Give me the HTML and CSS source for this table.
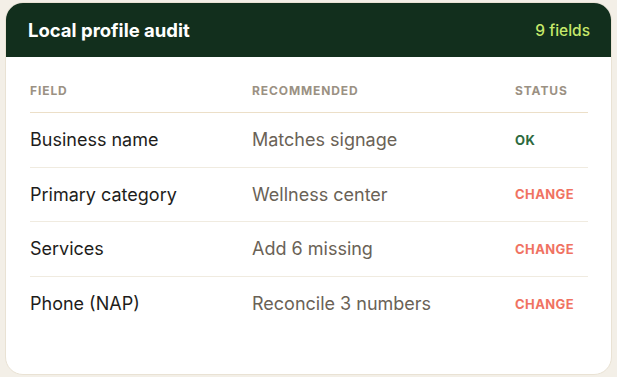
FILE: index.html
```html
<!DOCTYPE html>
<html>
<head>
<meta charset="utf-8">
<link rel="stylesheet" href="styles.css">
</head>
<body>
<div class="card">
  <div class="card-head">
    <div class="title">Local profile audit</div>
    <div class="count">9 fields</div>
  </div>
  <div class="table">
    <div class="row head">
      <div>FIELD</div><div>RECOMMENDED</div><div>STATUS</div>
    </div>
    <div class="row">
      <div class="field">Business name</div><div class="rec">Matches signage</div><div class="status ok">OK</div>
    </div>
    <div class="row">
      <div class="field">Primary category</div><div class="rec">Wellness center</div><div class="status change">CHANGE</div>
    </div>
    <div class="row">
      <div class="field">Services</div><div class="rec">Add 6 missing</div><div class="status change">CHANGE</div>
    </div>
    <div class="row last">
      <div class="field">Phone (NAP)</div><div class="rec">Reconcile 3 numbers</div><div class="status change">CHANGE</div>
    </div>
  </div>
</div>
</body>
</html>
```
FILE: styles.css
```css
html, body { margin: 0; padding: 0; }
body {
  background: #f3efe7;
  padding: 2px 5px 0 5px;
  font-family: Inter, "Noto Sans", sans-serif;
}
.card {
  width: 607px;
  height: 373px;
  box-sizing: border-box;
  background: #fff;
  border: 1px solid #e9e2d4;
  border-radius: 18px;
  overflow: hidden;
}
.card-head {
  height: 54px;
  background: #122f1d;
  display: flex;
  align-items: center;
  justify-content: space-between;
  padding: 0 21px 0 22px;
}
.title {
  color: #fff;
  font-weight: 700;
  font-size: 18.5px;
  letter-spacing: 0;
}
.count {
  color: #c6e86a;
  font-size: 15.5px;
  font-weight: 500;
}
.table {
  padding: 0 23px 0 24px;
}
.row {
  display: grid;
  grid-template-columns: 222px 263px 1fr;
  align-items: center;
  height: 54.5px;
  border-bottom: 1px solid #f0ebe0;
  box-sizing: border-box;
}
.row.head {
  height: 56px;
  align-items: start;
  padding-top: 26px;
  border-bottom: 1px solid #ecdfc8;
  font-size: 12px;
  font-weight: 700;
  letter-spacing: 0.9px;
  color: #9b9183;
}
.row.last { border-bottom: none; }
.field {
  font-size: 18px;
  color: #1e1d1b;
}
.rec {
  font-size: 18px;
  color: #6a6256;
}
.status {
  font-size: 13px;
  font-weight: 700;
  letter-spacing: 0.4px;
}
.ok { color: #2e6a3f; }
.change { color: #f07262; }
```
